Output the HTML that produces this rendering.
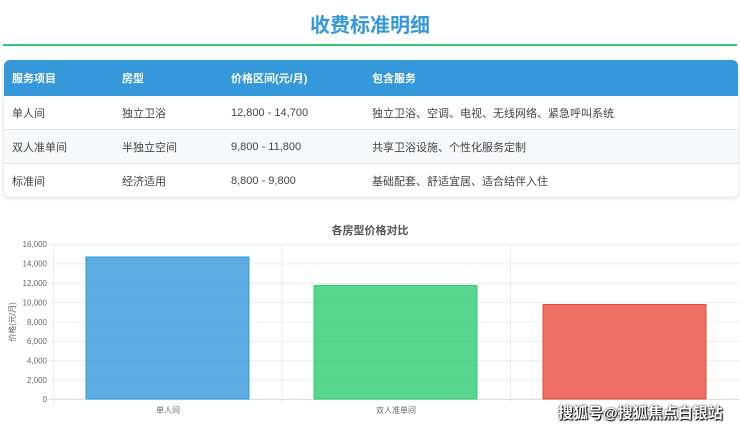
<!DOCTYPE html>
<html><head><meta charset="utf-8"><style>
*{margin:0;padding:0;box-sizing:border-box}
body{width:740px;height:429px;background:#fff;position:relative;overflow:hidden;font-family:"Liberation Sans","Noto Sans CJK SC",sans-serif;color:#444}
.t{position:absolute;left:0;right:0;top:9px;text-align:center;font-size:20px;font-weight:bold;color:#3498db}
.line{position:absolute;left:3px;right:3px;top:44px;height:2px;background:#2ecc71}
.card{position:absolute;left:4px;top:60px;width:734px;height:137px;border-radius:6px;box-shadow:0 1px 4px rgba(0,0,0,.15);overflow:hidden;background:#fff}
.row{position:absolute;left:0;right:0;font-size:11px}
.row span{position:absolute;top:50%;transform:translateY(-50%);white-space:nowrap}
.h{top:0;height:36px;background:#3498db;color:#fff;font-weight:bold}
.r1{top:36px;height:34px;border-bottom:1px solid #e3e6ea}
.r2{top:70px;height:34px;background:#f7f8fa;border-bottom:1px solid #e3e6ea}
.r3{top:104px;height:33px}
.c1{left:8px}.c2{left:118px}.c3{left:227px}.c4{left:368px}
.wm{position:absolute;left:558px;top:402px;font-size:15px;color:#fff;font-weight:bold;text-shadow:0 0 2px #000,1px 1px 1px #000;letter-spacing:0}
</style></head><body>
<div class="t">收费标准明细</div>
<div class="line"></div>
<div class="card">
<div class="row h"><span class="c1">服务项目</span><span class="c2">房型</span><span class="c3">价格区间(元/月)</span><span class="c4">包含服务</span></div>
<div class="row r1"><span class="c1">单人间</span><span class="c2">独立卫浴</span><span class="c3">12,800 - 14,700</span><span class="c4">独立卫浴、空调、电视、无线网络、紧急呼叫系统</span></div>
<div class="row r2"><span class="c1">双人准单间</span><span class="c2">半独立空间</span><span class="c3">9,800 - 11,800</span><span class="c4">共享卫浴设施、个性化服务定制</span></div>
<div class="row r3"><span class="c1">标准间</span><span class="c2">经济适用</span><span class="c3">8,800 - 9,800</span><span class="c4">基础配套、舒适宜居、适合结伴入住</span></div>
</div>
<svg style="position:absolute;left:0;top:0" width="740" height="429" font-family="Liberation Sans, Noto Sans CJK SC, sans-serif">
<text x="370" y="234" text-anchor="middle" font-size="11" font-weight="bold" fill="#555">各房型价格对比</text>
<g stroke="#ececec" stroke-width="1">
<line x1="49" y1="244.5" x2="739" y2="244.5"/><line x1="49" y1="263.9" x2="739" y2="263.9"/><line x1="49" y1="283.3" x2="739" y2="283.3"/><line x1="49" y1="302.6" x2="739" y2="302.6"/><line x1="49" y1="322" x2="739" y2="322"/><line x1="49" y1="341.4" x2="739" y2="341.4"/><line x1="49" y1="360.8" x2="739" y2="360.8"/><line x1="49" y1="380.1" x2="739" y2="380.1"/>
<line x1="53.5" y1="244" x2="53.5" y2="404"/><line x1="282" y1="244" x2="282" y2="404"/><line x1="510.5" y1="244" x2="510.5" y2="404"/>
</g>
<line x1="49" y1="399.5" x2="739" y2="399.5" stroke="#ddd"/>
<g font-size="8" fill="#666" text-anchor="end">
<text x="47" y="247">16,000</text><text x="47" y="266.5">14,000</text><text x="47" y="286">12,000</text><text x="47" y="305.5">10,000</text><text x="47" y="325">8,000</text><text x="47" y="344">6,000</text><text x="47" y="363.5">4,000</text><text x="47" y="383">2,000</text><text x="47" y="402">0</text>
</g>
<text transform="translate(15,322) rotate(-90)" text-anchor="middle" font-size="8" fill="#666">价格(元/月)</text>
<rect x="86" y="257" width="163" height="142" fill="#3498db" fill-opacity=".8" stroke="#3498db" stroke-width="1"/>
<rect x="314" y="285.5" width="163" height="113.5" fill="#2ecc71" fill-opacity=".8" stroke="#2ecc71"/>
<rect x="543" y="304.5" width="163" height="94.5" fill="#e74c3c" fill-opacity=".8" stroke="#e74c3c"/>
<g font-size="8" fill="#666" text-anchor="middle"><text x="168" y="413">单人间</text><text x="396" y="413">双人准单间</text></g>
</svg>
<div class="wm">搜狐号@搜狐焦点白银站</div>
</body></html>
